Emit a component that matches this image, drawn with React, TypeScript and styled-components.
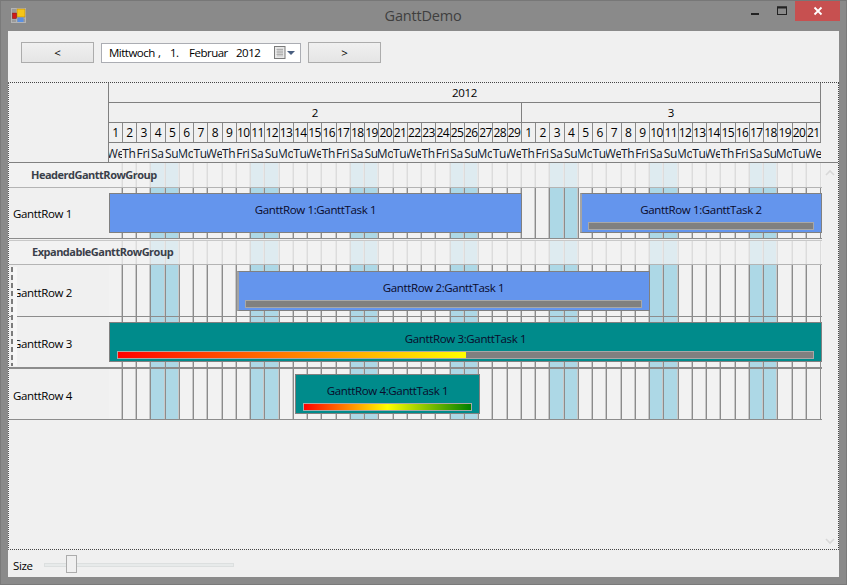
import React from "react";
import styled, { createGlobalStyle } from "styled-components";

const DAY = 14.25;
const FONT = `"Open Sans", "Noto Sans", sans-serif`;
const COLUMNS = `${DAY - 1.5}px repeat(48, ${DAY}px) ${DAY + 1}px`;

const Global = createGlobalStyle`
  html, body { margin: 0; padding: 0; background: #8a8a8a; overflow: hidden; }
  * { box-sizing: border-box; }
`;

const Win = styled.div`
  width: 847px; height: 585px; display: flex; flex-direction: column;
  background: #8a8a8a; border: 1px solid #7a7a7a; border-top-color: #777;
  font-family: ${FONT}; font-size: 11.5px; letter-spacing: -0.36px; color: #000; overflow: hidden;
`;
const TitleBar = styled.header`
  height: 30px; flex: none; display: flex; align-items: flex-start; padding-left: 10px; position: relative;
`;
const AppIcon = styled.svg`margin-top: 7px; display: block;`;
const Title = styled.h1`
  flex: 1; margin: 5px 0 0; text-align: center; font-size: 14.5px; font-weight: 400; color: #3f3f3f; line-height: 20px; padding-left: 78px; letter-spacing: -0.2px;
`;
const WinButtons = styled.div`display: flex; align-items: flex-start; margin-right: 6px;`;
const WinBtn = styled.div<{ $w: number; $close?: boolean }>`
  width: ${p => p.$w}px; height: 20px; display: flex; align-items: center; justify-content: center;
  background: ${p => (p.$close ? "#c75050" : "transparent")};
`;
const Client = styled.div`
  flex: 1; margin: 0 7px 7px; background: #f0f0f0; display: flex; flex-direction: column; min-height: 0;
`;
const Toolbar = styled.div`
  height: 51px; flex: none; display: flex; align-items: flex-start; padding: 11px 0 0 13px; gap: 7px;
`;
const NavButton = styled.button`
  width: 73px; height: 21px; padding: 0; border: 1px solid #acacac; background: linear-gradient(#f0f0f0, #e5e5e5);
  font-family: ${FONT}; font-size: 11.5px; color: #000; line-height: 17px; text-align: center;
`;
const DateBox = styled.div`
  width: 200px; height: 20px; margin-top: 1px; border: 1px solid #abadb3; background: #fff; display: flex; align-items: center; padding-left: 7px; line-height: 16px;
`;
const DateSeg = styled.span<{ $w: number }>`display: inline-block; width: ${p => p.$w}px; white-space: nowrap; letter-spacing: -0.5px;`;
const CalIcon = styled.svg`display: block; margin-left: 0;`;

const Frame = styled.section`
  height: 468px; flex: none; border: 1px dotted #444; border-left: 1px dotted #555; position: relative; display: flex; flex-direction: column; overflow: hidden;
`;
const Head = styled.div`
  height: 80px; flex: none; display: flex; border-bottom: 1px solid #808080;
`;
const Corner = styled.div`width: 99px; flex: none;`;
const HeadTimeline = styled.div`
  width: 713px; flex: none; border-left: 1px solid #808080;
`;
const HeadRow = styled.div<{ $line?: boolean }>`
  height: 20px; display: grid; grid-template-columns: ${COLUMNS};
  border-bottom: ${p => (p.$line === false ? "0" : "1px solid #808080")};
`;
const HeadSpan = styled.div<{ $days: number }>`
  grid-column: span ${p => p.$days}; display: flex; align-items: center; justify-content: center;
  line-height: 18px; font-size: 11.5px;
  & + & { border-left: 1px solid #808080; }
  &:last-child { border-right: 1px solid #808080; }
`;
const DayNum = styled.div`
  border-left: 1px solid #8a8a8a; display: flex; align-items: center; justify-content: center; font-size: 12px; white-space: nowrap; overflow: hidden; line-height: 18px; letter-spacing: -0.4px;
  &:first-child { border-left: 0; }
  &:last-child { border-right: 1px solid #8a8a8a; }
`;
const DayName = styled.div`
  display: flex; align-items: center; justify-content: center; font-size: 12px; color: #101828; white-space: nowrap; overflow: hidden; line-height: 19px;
`;

const Body = styled.div`display: flex; flex-direction: column; width: 813px; flex: none;`;
const Row = styled.div<{ $h: number; $line: string; $lw?: number; $topGap?: boolean }>`
  height: ${p => p.$h}px; display: flex; position: relative;
  border-bottom: ${p => p.$lw ?? 1}px solid ${p => p.$line};
  ${p => (p.$topGap ? "border-top: 1px solid #c8c8c8; margin-top: 1px;" : "")}
`;
const RowLabel = styled.div<{ $group?: boolean; $dy?: number }>`
  width: 100px; flex: none; display: flex; align-items: center; padding-left: 4px; padding-top: ${p => p.$dy ?? 0}px; white-space: nowrap; font-size: 11.5px; background: ${p => (p.$group ? "#f2f2f2" : "transparent")};
`;
const Track = styled.div`
  width: 713px; flex: none; display: grid; grid-template-columns: ${COLUMNS}; position: relative; background: #f2f2f2;
`;
const Cell = styled.div<{ $weekend: boolean; $group?: boolean }>`
  border-left: 1px solid ${p => (p.$group ? "#dcdcdc" : "#8c8c8c")};
  box-shadow: -1px 0 0 ${p => (p.$group ? "#e8e8e8" : "#c8c8c8")};
  background: ${p => (p.$weekend ? (p.$group ? "#deebf0" : "#add8e6") : "#f2f2f2")};
  &:first-child { border-left: 0; box-shadow: none; }
  &:nth-child(50) { border-right: 1px solid ${p => (p.$group ? "#dcdcdc" : "#8c8c8c")}; }
`;
const GroupTitle = styled.div<{ $x: number }>`
  position: absolute; left: ${p => p.$x}px; top: 0; bottom: 2px; display: flex; align-items: center; font-weight: 700; font-size: 11px; color: #3a3f4a; white-space: nowrap; letter-spacing: -0.5px;
`;
const TaskBox = styled.div<{ $x: number; $w: number; $top: number; $color: string; $soft?: boolean }>`
  position: absolute; left: ${p => p.$x}px; width: ${p => p.$w}px; top: ${p => p.$top}px; height: 40px;
  background: ${p => p.$color}; border: 1px solid #808080; ${p => (p.$soft ? "border-left: 2px solid #a4a4a4;" : "")}
  display: flex; flex-direction: column; padding: 8px 7px 0 ${p => (p.$soft ? 6 : 7)}px; align-items: stretch;
`;
const TaskText = styled.div`
  height: 16px; line-height: 16px; text-align: center; white-space: nowrap; font-size: 11.5px; color: #0a0a2a;
`;
const Progress = styled.div`
  height: 8px; margin-top: 4px; background: #808080; border: 1px solid #a8a8a8; flex: none;
`;
const ProgressFill = styled.div<{ $stops: string }>`
  height: 100%; background: linear-gradient(90deg, ${p => p.$stops});
`;
const Expander = styled.div`
  position: absolute; left: 2px; top: 184px; width: 6px; height: 99px; background: #f7f7f7;
  border-left: 2px solid transparent;
  &::before {
    content: ""; position: absolute; left: -2px; top: 0; bottom: 0; width: 2px;
    background: repeating-linear-gradient(180deg, #7c7c7c 0 5px, #f0f0f0 5px 8px);
  }
`;
const ScrollMark = styled.svg<{ $y: number }>`
  position: absolute; right: 3px; top: ${p => p.$y}px; display: block;
`;
const Footer = styled.footer`
  flex: 1; display: flex; align-items: flex-start; padding-left: 5px; min-height: 0;
`;
const SizeLabel = styled.span`margin-top: 8px; line-height: 16px; font-size: 11.5px; width: 31px;`;
const Slider = styled.div`
  width: 190px; height: 4px; margin-top: 13px; background: #e7eaea; border: 1px solid #dcdfdf; position: relative;
`;
const Thumb = styled.div`
  position: absolute; left: 21px; top: -9px; width: 11px; height: 18px; background: #f0f0f0; border: 1px solid #acacac;
`;

const weekendIdx = new Set([3, 4, 10, 11, 17, 18, 24, 25, 31, 32, 38, 39, 45, 46]);
const names = ["We", "Th", "Fri", "Sa", "Su", "Mo", "Tu"];
const days = Array.from({ length: 50 }, (_, i) => (i < 29 ? i + 1 : i - 28));

const Cells = ({ group }: { group?: boolean }) => (
  <>
    {days.map((_, i) => (
      <Cell key={i} $weekend={weekendIdx.has(i)} $group={group} />
    ))}
  </>
);

type TaskP = {
  text: string; x: number; w: number; top: number; color: string; soft?: boolean;
  progress?: { pct: number; stops: string };
};
const Task = ({ text, x, w, top, color, soft, progress }: TaskP) => (
  <TaskBox $x={x} $w={w} $top={top} $color={color} $soft={soft}>
    <TaskText>{text}</TaskText>
    {progress && (
      <Progress>
        <ProgressFill $stops={progress.stops} style={{ width: `${progress.pct}%` }} />
      </Progress>
    )}
  </TaskBox>
);

const BLUE = "#6495ed";
const TEAL = "#008b8b";

export default function App() {
  return (
    <Win>
      <Global />
      <TitleBar>
        <AppIcon width="15" height="15" viewBox="0 0 15 15">
          <rect x="0.5" y="0.5" width="14" height="14" fill="#9a9a9a" stroke="#b4b4b4" />
          <path d="M5.5 0v15M0 5h5M0 11h5M6 10h9" stroke="#b4b4b4" fill="none" />
          <rect x="6" y="1" width="8" height="8" fill="#f5c518" stroke="#b8860b" strokeWidth="0.6" />
          <rect x="1.5" y="5" width="4" height="5.5" fill="#d11a1a" stroke="#7a1010" strokeWidth="0.5" />
          <rect x="6.5" y="9.5" width="6" height="4.5" fill="#5b8fe0" />
        </AppIcon>
        <Title>GanttDemo</Title>
        <WinButtons>
          <WinBtn $w={26}>
            <svg width="10" height="10" viewBox="0 0 10 10"><rect x="1" y="7" width="8" height="2" fill="#222" /></svg>
          </WinBtn>
          <WinBtn $w={27}>
            <svg width="12" height="10" viewBox="0 0 12 10"><rect x="1.5" y="1" width="9" height="7.5" fill="none" stroke="#222" /><rect x="1" y="0.5" width="10" height="2" fill="#222" /></svg>
          </WinBtn>
          <WinBtn $w={45} $close>
            <svg width="10" height="10" viewBox="0 0 10 10"><path d="M1.5 1.5l7 7M8.5 1.5l-7 7" stroke="#fff" strokeWidth="1.8" /></svg>
          </WinBtn>
        </WinButtons>
      </TitleBar>
      <Client>
        <Toolbar>
          <NavButton>&lt;</NavButton>
          <DateBox>
            <DateSeg $w={49}>Mittwoch</DateSeg>
            <DateSeg $w={12}>,</DateSeg>
            <DateSeg $w={19}>1.</DateSeg>
            <DateSeg $w={47}>Februar</DateSeg>
            <DateSeg $w={38}>2012</DateSeg>
            <CalIcon width="22" height="14" viewBox="0 0 22 14">
              <rect x="0.5" y="0.5" width="10.5" height="12" fill="#e8e8e8" stroke="#7a7a7a" />
              <path d="M2.5 3.5h6.5M2.5 6h6.5M2.5 8.5h6.5M4 2.5v8M6 2.5v8M8 2.5v8" stroke="#a8a8a8" strokeWidth="0.8" />
              <path d="M13 5h8l-4 4z" fill="#4a5f80" />
            </CalIcon>
          </DateBox>
          <NavButton>&gt;</NavButton>
        </Toolbar>
        <Frame>
          <Head>
            <Corner />
            <HeadTimeline>
              <HeadRow><HeadSpan $days={50}>2012</HeadSpan></HeadRow>
              <HeadRow>
                <HeadSpan $days={29}>2</HeadSpan>
                <HeadSpan $days={21}>3</HeadSpan>
              </HeadRow>
              <HeadRow>{days.map((d, i) => <DayNum key={i}>{d}</DayNum>)}</HeadRow>
              <HeadRow $line={false}>{days.map((_, i) => <DayName key={i}>{names[i % 7]}</DayName>)}</HeadRow>
            </HeadTimeline>
          </Head>
          <Body>
            <Row $h={25} $line="#b4b4b4">
              <RowLabel $group />
              <Track><Cells group /></Track>
              <GroupTitle $x={22}>HeaderdGanttRowGroup</GroupTitle>
            </Row>
            <Row $h={51} $line="#8c8c8c">
              <RowLabel>GanttRow 1</RowLabel>
              <Track>
                <Cells />
                <Task text="GanttRow 1:GanttTask 1" x={0} w={413} top={5} color={BLUE} />
                <Task text="GanttRow 1:GanttTask 2" x={471} w={242} top={5} color={BLUE} soft progress={{ pct: 0, stops: "#f00, #ff0" }} />
              </Track>
            </Row>
            <Row $h={25} $line="#b4b4b4" $topGap>
              <RowLabel $group />
              <Track><Cells group /></Track>
              <GroupTitle $x={23}>ExpandableGanttRowGroup</GroupTitle>
            </Row>
            <Row $h={52} $line="#8c8c8c">
              <RowLabel $dy={4}>GanttRow 2</RowLabel>
              <Track>
                <Cells />
                <Task text="GanttRow 2:GanttTask 1" x={128} w={413} top={6} color={BLUE} soft progress={{ pct: 0, stops: "#f00, #ff0" }} />
              </Track>
            </Row>
            <Row $h={52} $line="#8c8c8c" $lw={2}>
              <RowLabel $dy={2}>GanttRow 3</RowLabel>
              <Track>
                <Cells />
                <Task text="GanttRow 3:GanttTask 1" x={0} w={713} top={5} color={TEAL} progress={{ pct: 50, stops: "#f00, #ff0" }} />
              </Track>
            </Row>
            <Row $h={51} $line="#8c8c8c">
              <RowLabel $dy={2}>GanttRow 4</RowLabel>
              <Track>
                <Cells />
                <Task text="GanttRow 4:GanttTask 1" x={186} w={185} top={5} color={TEAL} progress={{ pct: 100, stops: "#f00, #ff0 50%, #008000" }} />
              </Track>
            </Row>
          </Body>
          <Expander />
          <ScrollMark $y={86} width="10" height="7" viewBox="0 0 10 7"><path d="M1 6l4-4 4 4" fill="none" stroke="#d8d8d8" strokeWidth="1.6" /></ScrollMark>
          <ScrollMark $y={455} width="10" height="7" viewBox="0 0 10 7"><path d="M1 1l4 4 4-4" fill="none" stroke="#d8d8d8" strokeWidth="1.6" /></ScrollMark>
        </Frame>
        <Footer>
          <SizeLabel>Size</SizeLabel>
          <Slider><Thumb /></Slider>
        </Footer>
      </Client>
    </Win>
  );
}
